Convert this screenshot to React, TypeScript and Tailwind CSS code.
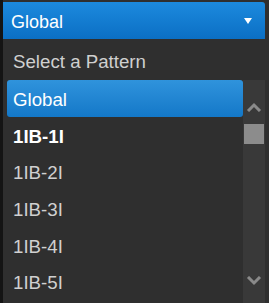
export default function App() {
  const items = ['1IB-1I', '1IB-2I', '1IB-3I', '1IB-4I', '1IB-5I'];

  return (
    <div
      className="w-[269px] h-[303px] overflow-hidden bg-[#2f2f2f] border-l-[3px] border-[#141414] flex flex-col"
      style={{ fontFamily: '"Liberation Sans", Arial, sans-serif' }}
    >
      <div className="mt-[2px] mr-[4px] h-[37px] shrink-0 rounded-tr-[3px] bg-gradient-to-b from-[#1c8ade] to-[#0b6fc4] flex items-center justify-between pl-[8px] pr-[12px]">
        <span className="text-[18px] text-white leading-none pt-[2px]">Global</span>
        <svg width="10" height="8" viewBox="0 0 10 8">
          <path d="M1 1h8L5 7z" fill="#fff" />
        </svg>
      </div>

      <div className="h-[41px] shrink-0 flex items-center pl-[10px] pt-[5px] text-[18.7px] text-[#d0d0d0]">
        Select a Pattern
      </div>

      <div className="flex flex-1 min-h-0">
        <div className="w-[236px] ml-[4px] flex flex-col">
          <div className="h-[37px] shrink-0 rounded-[3px] bg-gradient-to-b from-[#2f93dc] to-[#1378c8] flex items-center pl-[6px] pt-[3px] text-[18.7px] text-white">
            Global
          </div>
          {items.map((item, i) => (
            <div
              key={item}
              className={
                i === 0
                  ? 'h-[36.6px] shrink-0 flex items-center pl-[6px] pt-[3px] text-[18.7px] font-bold text-white'
                  : 'h-[36.6px] shrink-0 flex items-center pl-[6px] pt-[3px] text-[18.7px] text-[#d0d0d0]'
              }
            >
              {item}
            </div>
          ))}
        </div>

        <div className="w-[22px] bg-[#393939] flex flex-col items-center">
          <svg className="mt-[22px]" width="16" height="10" viewBox="0 0 16 10">
            <path d="M2 9L8 3l6 6" fill="none" stroke="#8a8a8a" strokeWidth="3" />
          </svg>
          <div className="mt-[12px] w-[20px] h-[20px] bg-[#8c8c8c]" />
          <div className="flex-1" />
          <svg className="mb-[17px]" width="16" height="10" viewBox="0 0 16 10">
            <path d="M2 1l6 6 6-6" fill="none" stroke="#8a8a8a" strokeWidth="3" />
          </svg>
        </div>
      </div>
    </div>
  );
}
